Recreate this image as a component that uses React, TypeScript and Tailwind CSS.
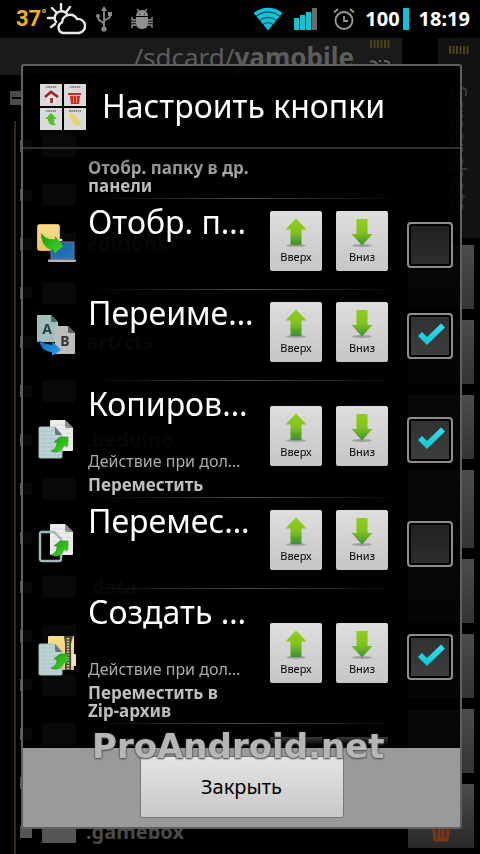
import React from 'react';

type IconName = 'folder' | 'rename' | 'copy' | 'move' | 'zip';

interface ButtonRow {
  icon: IconName;
  title: string;
  longPress?: string;
  checked: boolean;
}

const rows: ButtonRow[] = [
  { icon: 'folder', title: 'Отобр. п…', checked: false },
  { icon: 'rename', title: 'Переиме…', checked: true },
  { icon: 'copy', title: 'Копиров…', longPress: 'Переместить', checked: true },
  { icon: 'move', title: 'Перемес…', checked: false },
  { icon: 'zip', title: 'Создать …', longPress: 'Переместить в\nZip-архив', checked: true },
];

const treeFolders = [
  '', '', 'editions', '', 'art/cts', '', '.beduino',
  '', '', '.data', '', '', '', '', '.gamebox',
];

// heights of the toolbar buttons in the side strip
const sideButtons = ['h-16', 'h-16', 'h-16', 'h-[78px]', 'h-16', 'h-16', 'h-16'];

const Gradients: React.FC = () => (
  <svg width="0" height="0" className="absolute" aria-hidden="true">
    <defs>
      <linearGradient id="arrow" x1="0" y1="0" x2="0" y2="1">
        <stop offset="0" stopColor="#94cf17" />
        <stop offset="0.5" stopColor="#80c41c" />
        <stop offset="1" stopColor="#3d9130" />
      </linearGradient>
      <linearGradient id="curve" x1="0" y1="0" x2="1" y2="1">
        <stop offset="0" stopColor="#1d9a12" />
        <stop offset="1" stopColor="#3fdc22" />
      </linearGradient>
      <linearGradient id="yellow" x1="0" y1="0" x2="0" y2="1">
        <stop offset="0" stopColor="#fbe08a" />
        <stop offset="1" stopColor="#e9c469" />
      </linearGradient>
      <linearGradient id="screen" x1="0" y1="0" x2="1" y2="1">
        <stop offset="0" stopColor="#1a5fa0" />
        <stop offset="1" stopColor="#2878c0" />
      </linearGradient>
      <linearGradient id="blue" x1="0" y1="0" x2="1" y2="1">
        <stop offset="0" stopColor="#0d66b5" />
        <stop offset="1" stopColor="#2aa2f2" />
      </linearGradient>
      <linearGradient id="check" x1="0" y1="0" x2="0" y2="1">
        <stop offset="0" stopColor="#35dff2" />
        <stop offset="1" stopColor="#12c6d2" />
      </linearGradient>
    </defs>
  </svg>
);

const WhitePage: React.FC = () => (
  <>
    <path d="M15 1h14l8 8v22a1 1 0 0 1-1 1H15a1 1 0 0 1-1-1V2a1 1 0 0 1 1-1z" fill="#ececec" />
    <path d="M16 6h13M16 10h19M16 14h19M16 18h19M16 22h19M16 26h19" stroke="#dcdcdc" />
    <path d="M29 1l8 8h-6a2 2 0 0 1-2-2z" fill="#8d8d8d" />
  </>
);

const BluePage: React.FC = () => (
  <>
    <path d="M4 8h15l7 8v22a1 1 0 0 1-1 1H4a1 1 0 0 1-1-1V9a1 1 0 0 1 1-1z" fill="#bcd2d3" stroke="#a3bcbd" />
    <path d="M5 12h13M5 16h16M5 20h20M5 24h20M5 28h20M5 32h20M5 36h20" stroke="#a9c3c5" />
    <path d="M19 8l7 8h-5a2 2 0 0 1-2-2z" fill="#5c7779" />
  </>
);

const GreenArrow: React.FC = () => (
  <path d="M15 32c5-2 6-5 6-9l-3 0 6-5 8 0c0 4 0 7-1 10l-3-2c-2 6-7 9-13 6z" fill="url(#curve)" stroke="#1f8a15" strokeWidth="0.6" />
);

const RowIcon: React.FC<{ name: IconName }> = ({ name }) => (
  <svg viewBox="0 0 40 40" className="h-10 w-10 shrink-0" aria-hidden="true">
    {name === 'folder' && (
      <>
        <rect x="1.5" y="0.5" width="22" height="26" rx="2" fill="url(#yellow)" stroke="#d9b45c" />
        <circle cx="25" cy="16" r="1.3" fill="#f4efe0" />
        <path d="M15 18h23v17H15z" fill="url(#screen)" stroke="#6d7b88" />
        <path d="M12 35.500h28v1.500a1 1 0 0 1-1 1H13a1 1 0 0 1-1-1z" fill="#b9b4b0" />
        <path d="M5 9c4 5 8 7 14 6l0-3 8 10-9 8 0-4C10 26 5 19 5 9z" fill="url(#curve)" />
      </>
    )}
    {name === 'rename' && (
      <>
        <path d="M2 0h13l7 7v20H2a1 1 0 0 1-1-1V1a1 1 0 0 1 1-1z" fill="#9fbfba" />
        <path d="M15 0l7 7h-6a1 1 0 0 1-1-1z" fill="#4d6967" />
        <path d="M20 11h12l7 7v20a1 1 0 0 1-1 1H20a1 1 0 0 1-1-1V12a1 1 0 0 1 1-1z" fill="#bdbdbd" />
        <path d="M32 11l7 7h-6a1 1 0 0 1-1-1z" fill="#5e5e5e" />
        <text x="11" y="19" textAnchor="middle" fontSize="14" fontWeight="700" fontFamily="Noto Sans, sans-serif" fill="#2f3b40">A</text>
        <text x="29" y="31" textAnchor="middle" fontSize="14" fontWeight="700" fontFamily="Noto Sans, sans-serif" fill="#333">B</text>
        <path d="M3 25c5 4 9 4 13 5l1-3 8 8-9 6 0-4C9 37 4 32 3 25z" fill="url(#blue)" />
      </>
    )}
    {name === 'copy' && (
      <>
        <WhitePage />
        <BluePage />
        <GreenArrow />
      </>
    )}
    {name === 'move' && (
      <>
        <WhitePage />
        <path d="M5 9h13l7 7v20a2 2 0 0 1-2 2H6a2 2 0 0 1-2-2V10z" fill="none" stroke="#a3b8bc" strokeWidth="2.400" />
        <path d="M6 11h8v25H6z" fill="#000" />
        <GreenArrow />
      </>
    )}
    {name === 'zip' && (
      <>
        <path d="M13 0h25v34H13a1 1 0 0 1-1-1V1a1 1 0 0 1 1-1z" fill="url(#yellow)" />
        <path d="M36 18h3a1 1 0 0 1 1 1v10a1 1 0 0 1-1 1h-3z" fill="#efe3c0" />
        <path d="M28 0h9l-2 8v26h-6V8z" fill="#4a4438" />
        <path d="M32 2v32" stroke="#c8c2b4" strokeWidth="2.600" strokeDasharray="1.500 1.200" />
        <BluePage />
        <GreenArrow />
      </>
    )}
  </svg>
);

const MoveButton: React.FC<{ direction: 'up' | 'down' }> = ({ direction }) => (
  <button
    type="button"
    className="mb-[6px] flex h-[60px] w-[52px] shrink-0 flex-col items-center rounded-[2px] bg-gradient-to-b from-[#dedede] to-[#c6c6c6] pt-[7px] text-[11px] leading-[18px] text-black"
  >
    <svg viewBox="0 0 22 30" className="h-[30px] w-[22px]" aria-hidden="true">
      <ellipse cx="11" cy="27.500" rx="10" ry="1.500" fill="#8a8a8a" opacity="0.7" />
      {direction === 'up' ? (
        <path d="M11 0.500L21.500 11.500H16.500V27H5.500V11.500H0.500z" fill="url(#arrow)" />
      ) : (
        <path d="M5.500 1H16.500V16H21.500L11 27.500L0.500 16H5.500z" fill="url(#arrow)" />
      )}
    </svg>
    {direction === 'up' ? 'Вверх' : 'Вниз'}
  </button>
);

const RowDivider: React.FC = () => (
  <div className="ml-[65px] mr-[53px] h-px bg-gradient-to-r from-transparent via-[#4a4a4a] to-transparent" />
);

const SettingRow: React.FC<{ row: ButtonRow }> = ({ row }) => (
  <li>
    <div className="flex min-h-[90px] items-center pl-[13px] pr-[7px]">
      <RowIcon name={row.icon} />
      <div className="ml-3 mr-3 min-w-0 flex-1 self-stretch">
        <h2 className="h-[68px] truncate text-[32px] leading-[46px] text-white">{row.title}</h2>
        {row.longPress && (
          <>
            <p className="truncate text-[16px] leading-6 text-[#aaa]">Действие при дол…</p>
            <p className="whitespace-pre-line py-[3px] text-[17px] font-bold leading-[18px] text-[#bebebe]">{row.longPress}</p>
          </>
        )}
      </div>
      <MoveButton direction="up" />
      <span className="w-[14px] shrink-0" />
      <MoveButton direction="down" />
      <label className="relative ml-[19px] mt-[2px] block h-[46px] w-[46px] shrink-0">
        <input
          type="checkbox"
          defaultChecked={row.checked}
          aria-label={row.title}
          className="peer block h-full w-full appearance-none rounded-[4px] border-2 border-[#8e8e8e] bg-gradient-to-b from-[#202020] to-[#2e2e2e] shadow-[inset_0_0_0_2px_#000] checked:from-[#303030] checked:to-[#3e3e3e]"
        />
        <svg viewBox="0 0 46 46" className="pointer-events-none absolute inset-0 hidden h-full w-full peer-checked:block" aria-hidden="true">
          <path d="M11 23l4-4 5 5L34 10.500l4 4L20 32z" fill="url(#check)" />
        </svg>
      </label>
    </div>
    <RowDivider />
  </li>
);

const StatusBar: React.FC = () => (
  <header className="flex h-[38px] shrink-0 items-center justify-between bg-black pl-4 pr-[10px]">
    <div className="flex items-center">
      <span className="flex w-[30px] whitespace-nowrap font-['Roboto',sans-serif] text-[22px] font-bold leading-8 text-[#f2b21c]">
        37<sup className="top-0 text-[14px] leading-6">°</sup>
      </span>
      <svg viewBox="0 0 40 32" className="h-8 w-10" fill="none" stroke="#e8e8e8" strokeWidth="2.400" strokeLinecap="round" aria-hidden="true">
        <path d="M15 1v5M6 5l4 4M24 4l-3 4M2 15h5M5 24l4-3M10 19a6 6 0 1 1 11-8" />
        <path d="M17 30a5.500 5.500 0 0 1-1-10.500 8 8 0 0 1 15-3.500 7 7 0 0 1 2 14z" />
      </svg>
      <svg viewBox="0 0 18 26" className="ml-[9px] h-[26px] w-[18px]" fill="none" stroke="#8a8a8a" strokeWidth="1.800" aria-hidden="true">
        <path d="M9 3v19M9 19c0-5-6-2-6-8v-1M9 16c0-4 6-2 6-6V9" />
        <path d="M9 0l3 5H6z" fill="#8a8a8a" stroke="none" />
        <circle cx="9" cy="23" r="2.600" fill="#8a8a8a" stroke="none" />
        <circle cx="3" cy="10" r="2" fill="#8a8a8a" stroke="none" />
        <path d="M13 6h4v4h-4z" fill="#8a8a8a" stroke="none" />
      </svg>
      <svg viewBox="0 0 22 22" className="ml-[18px] h-[22px] w-[22px]" fill="#8f8f8f" aria-hidden="true">
        <path d="M5 8a6 6 0 0 1 12 0zM5 9h12v7a5 5 0 0 1-5 5h-2a5 5 0 0 1-5-5z" />
        <path d="M6 1l3 3M16 1l-3 3M5 12H1V9M17 12h4V9M5 14.500H0M17 14.500h5M5 17H1v3M17 17h4v3" stroke="#8f8f8f" strokeWidth="1.400" fill="none" />
        <path d="M8 6h1M13 6h1" stroke="#000" />
      </svg>
    </div>
    <div className="flex items-center text-[20px] font-bold leading-6 text-white">
      <svg viewBox="0 0 30 24" className="h-6 w-[30px]" aria-hidden="true">
        <path d="M15 23.500L0.500 6C9-1 21-1 29.500 6z" fill="#0cc3dc" />
        <path d="M3 9.500c7-6 17-6 24 0M6.500 13.500c5-4 12-4 17 0M10 17.500c3-2.400 7-2.400 10 0" stroke="#00212a" strokeWidth="1" fill="none" />
      </svg>
      <svg viewBox="0 0 24 22" className="ml-[11px] h-[22px] w-6" fill="#12c4d2" aria-hidden="true">
        <path d="M0 10h5v12H0zM6 7h5v15H6zM12 4h5v18h-5z" />
        <path d="M18 0h5v22h-5z" fill="#6a6a6a" />
      </svg>
      <svg viewBox="0 0 22 22" className="ml-[15px] h-[22px] w-[22px]" fill="none" stroke="#9a9a9a" strokeWidth="1.800" aria-hidden="true">
        <circle cx="11" cy="12.500" r="8.500" />
        <path d="M11 8v5h4M1 4.500L5 1M21 4.500L17 1" />
      </svg>
      <span className="ml-[10px]">100</span>
      <span className="ml-[3px] h-[22px] w-[6px] bg-[#10c5da]" />
      <span className="ml-[10px]">18:19</span>
    </div>
  </header>
);

const SdTicks: React.FC = () => (
  <svg viewBox="0 0 20 8" className="h-2 w-5" aria-hidden="true">
    <path d="M1 0v8M4.500 0v8M8 0v8M11.500 0v8M15 0v8M18.500 0v8" stroke="#4f4215" strokeWidth="2" />
  </svg>
);

const FileManager: React.FC = () => (
  <main className="flex min-h-0 flex-1 overflow-hidden">
    <div className="min-w-0 flex-1">
      <div className="flex h-[37px] items-start justify-end bg-[#1a1a1a] pr-3">
        <p className="mr-4 text-[26px] leading-[38px] text-[#5c5c5c]">
          /sdcard/<b>yamobile</b>
        </p>
        <span className="flex flex-col gap-3 pt-[2px]">
          <SdTicks />
          <svg viewBox="0 0 20 5" className="h-[5px] w-5" aria-hidden="true">
            <path d="M0 2c3-2 6 0 7 3M9 1h2M14 1c4 0 6 1 6 4" stroke="#666" strokeWidth="2" fill="none" />
          </svg>
        </span>
      </div>
      <div className="flex h-[46px] items-center pl-[10px]">
        <span className="flex h-[14px] w-[14px] items-center bg-[#4a4a4a] px-[2px]">
          <i className="h-[2px] w-full bg-black" />
        </span>
      </div>
      <ul className="ml-[14px] border-l-2 border-[#35261a]">
        {treeFolders.map((name, i) => (
          <li key={i} className="flex h-[49px] items-center pl-1 text-[20px] font-bold text-[#4a4a4a]">
            <span className="h-3 w-3 bg-[#555]" />
            <span className="ml-[10px] h-[22px] w-[34px] bg-[#555]" />
            <span className="ml-[10px]">{name}</span>
          </li>
        ))}
      </ul>
    </div>
    <aside className="flex w-[78px] shrink-0 flex-col items-end">
      <div className="mb-[7px] flex h-[200px] w-[42px] shrink-0 flex-col items-center bg-[#121212] pt-2 text-[22px] text-[#3a3a3a]">
        <SdTicks />
        <span className="mt-8 [writing-mode:vertical-rl]">Screenshots</span>
      </div>
      <div className="flex flex-col gap-[11px] pr-[6px]">
        {sideButtons.map((height, i) => (
          <div key={i} className={`${height} w-[66px] shrink-0 bg-gradient-to-b from-[#4c4c4c] to-[#343434]`} />
        ))}
        <div className="flex h-16 w-[66px] items-end justify-center bg-gradient-to-b from-[#4c4c4c] to-[#282828] pb-[6px]">
          <svg viewBox="0 0 24 28" className="h-7 w-6" fill="none" stroke="#7c3614" strokeWidth="3" aria-hidden="true">
            <path d="M2 8h20M4 10l2 16h12l2-16M10 10v15M14 10v15" />
          </svg>
        </div>
      </div>
    </aside>
  </main>
);

const DialogIcon: React.FC = () => (
  <svg viewBox="0 0 46 46" className="h-[46px] w-[46px]" aria-hidden="true">
    <path d="M0 0h22v22H0zM24 0h22v22H24zM0 24h22v22H0zM24 24h22v22H24z" fill="#d9dadc" />
    <path d="M6 3h11M30 3h11M6 27h10M29 27h12" stroke="#666" strokeWidth="1.600" strokeDasharray="1.500 0.700" />
    <path d="M7 12l4-3 5 3v7H7z" fill="#efe6e2" />
    <path d="M5 13l6-5 7 5" fill="none" stroke="#a32020" strokeWidth="2.600" />
    <path d="M10 14h3v5h-3z" fill="#a33a30" />
    <path d="M28 9h13v2H28zM30 12h10l-1 8h-8z" fill="#d42a1c" />
    <path d="M33.500 12v7M36.500 12v7" stroke="#f0b8b0" strokeWidth="0.800" />
    <path d="M11 29l6 6h-3c0 3 0 5 2 6-5 1-8-2-8-6H5z" fill="#4fc21d" />
    <path d="M29 29l5 1 7 8-3 4-6-3z" fill="#ecd06c" />
  </svg>
);

const App: React.FC = () => {
  return (
    <div className="flex h-screen flex-col overflow-hidden bg-black font-['Noto_Sans',sans-serif]">
      <Gradients />
      <StatusBar />
      <FileManager />

      <div className="fixed inset-0 flex pb-[25px] pl-[21px] pr-[18px] pt-16">
        <section
          role="dialog"
          aria-labelledby="dialog-title"
          className="relative flex w-full flex-col overflow-hidden rounded-[3px] border-2 border-[#606060] bg-black/90"
        >
          <div className="flex h-[81px] shrink-0 items-center gap-4 pl-[17px]">
            <DialogIcon />
            <h1 id="dialog-title" className="whitespace-nowrap pb-[2px] text-[32px] leading-10 text-white">Настроить кнопки</h1>
          </div>
          <div className="h-[2px] shrink-0 bg-[#303030]" />

          <ul className="min-h-0 flex-1 overflow-hidden">
            {/* tail of the row scrolled under the title */}
            <li>
              <p className="ml-[65px] mr-[200px] bg-gradient-to-b from-[#555] to-[#bebebe] to-60% bg-clip-text pb-[3px] pt-[10px] text-[17px] font-bold leading-[18px] text-transparent">
                Отобр. папку в др. панели
              </p>
              <RowDivider />
            </li>
            {rows.map((row) => (
              <SettingRow key={row.title} row={row} />
            ))}
            {/* next row, only the faded tops of its buttons show */}
            <li className="flex justify-end gap-[14px] pr-[72px] pt-[13px]">
              <span className="h-[60px] w-[52px] bg-gradient-to-b from-[#3a3a3a] to-black to-20%" />
              <span className="h-[60px] w-[52px] bg-gradient-to-b from-[#3a3a3a] to-black to-20%" />
            </li>
          </ul>

          <footer className="relative flex h-[79px] shrink-0 justify-center bg-[#9a9a9a] pt-2">
            <button
              type="button"
              className="h-[62px] w-[204px] rounded-[2px] border border-[#777] bg-gradient-to-b from-[#e4e4e4] to-[#c8c8c8] text-[20px] text-black"
            >
              Закрыть
            </button>
            <span className="pointer-events-none absolute -top-[24px] left-[69px] whitespace-nowrap font-['DejaVu_Sans',sans-serif] text-[34px] font-bold leading-[44px] text-[#c4c4c4]/90 [text-shadow:0_0_2px_#333,0_1px_2px_#555]">
              ProAndroid.net
            </span>
          </footer>
        </section>
      </div>
    </div>
  );
};

export default App;
